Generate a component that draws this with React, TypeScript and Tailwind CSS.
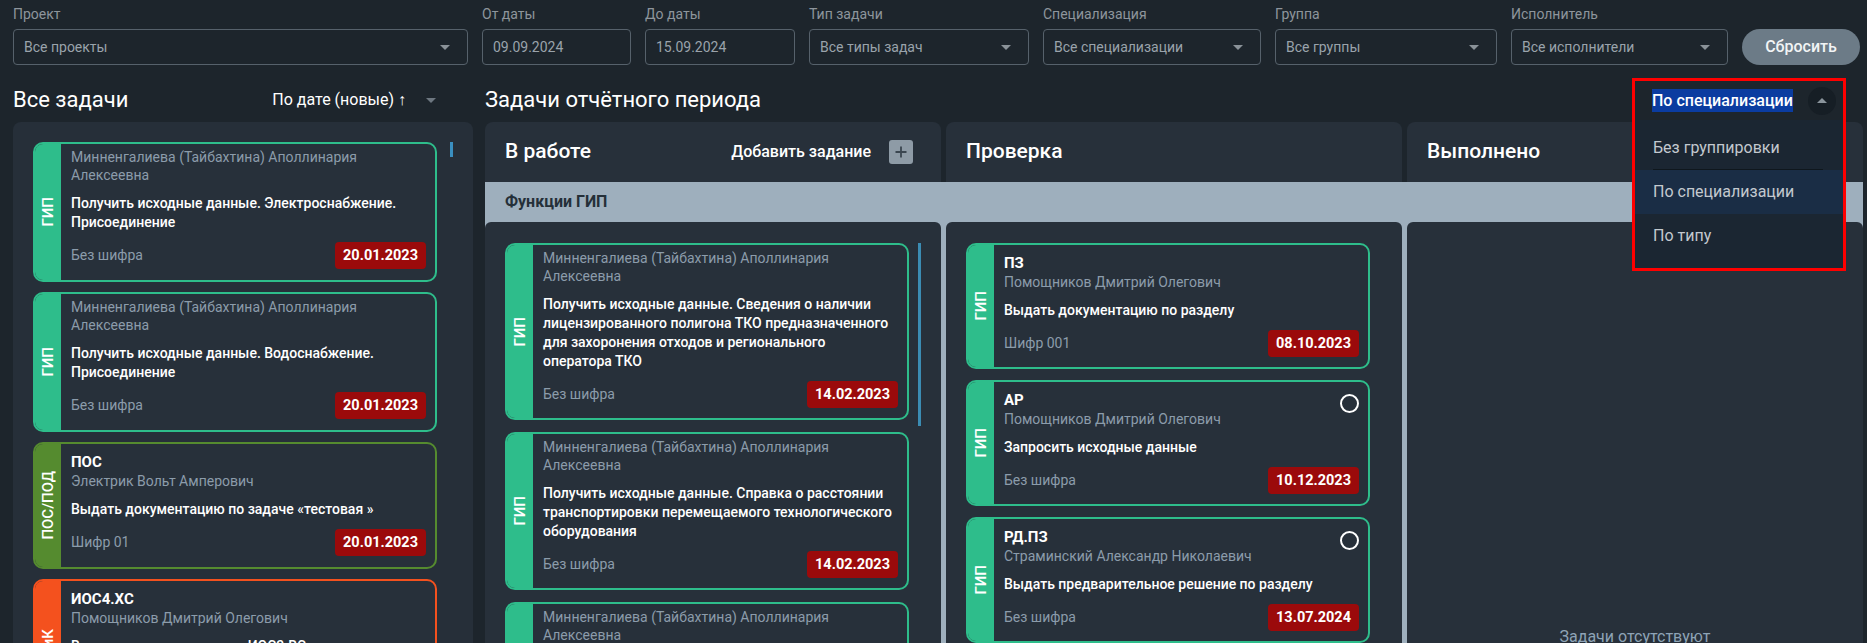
import React from "react";

type Tone = "green" | "olive" | "orange";

type Task = {
  strip: string;
  tone: Tone;
  code?: string;
  name: string[];
  title: string[];
  cipher: string;
  date: string;
  circle?: boolean;
};

const toneBorder: Record<Tone, string> = {
  green: "border-[#2ebd8b]",
  olive: "border-[#558b2f]",
  orange: "border-[#f4511e]",
};
const toneBg: Record<Tone, string> = {
  green: "bg-[#2ebd8b]",
  olive: "bg-[#558b2f]",
  orange: "bg-[#f4511e]",
};

const MIN = ["Минненгалиева (Тайбахтина) Аполлинария", "Алексеевна"];

const leftTasks: Task[] = [
  {
    strip: "ГИП",
    tone: "green",
    name: MIN,
    title: ["Получить исходные данные. Электроснабжение.", "Присоединение"],
    cipher: "Без шифра",
    date: "20.01.2023",
  },
  {
    strip: "ГИП",
    tone: "green",
    name: MIN,
    title: ["Получить исходные данные. Водоснабжение.", "Присоединение"],
    cipher: "Без шифра",
    date: "20.01.2023",
  },
  {
    strip: "ПОС/ПОД",
    tone: "olive",
    code: "ПОС",
    name: ["Электрик Вольт Амперович"],
    title: ["Выдать документацию по задаче «тестовая »"],
    cipher: "Шифр 01",
    date: "20.01.2023",
  },
  {
    strip: "ВиК",
    tone: "orange",
    code: "ИОС4.ХС",
    name: ["Помощников Дмитрий Олегович"],
    title: ["Выдать документацию по ИОС3.ВС"],
    cipher: "Без шифра",
    date: "20.01.2023",
  },
];

const workTasks: Task[] = [
  {
    strip: "ГИП",
    tone: "green",
    name: MIN,
    title: [
      "Получить исходные данные. Сведения о наличии",
      "лицензированного полигона ТКО предназначенного",
      "для захоронения отходов и регионального",
      "оператора ТКО",
    ],
    cipher: "Без шифра",
    date: "14.02.2023",
  },
  {
    strip: "ГИП",
    tone: "green",
    name: MIN,
    title: [
      "Получить исходные данные. Справка о расстоянии",
      "транспортировки перемещаемого технологического",
      "оборудования",
    ],
    cipher: "Без шифра",
    date: "14.02.2023",
  },
  {
    strip: "ГИП",
    tone: "green",
    name: MIN,
    title: ["Получить исходные данные. Технические условия"],
    cipher: "Без шифра",
    date: "14.02.2023",
  },
];

const checkTasks: Task[] = [
  {
    strip: "ГИП",
    tone: "green",
    code: "ПЗ",
    name: ["Помощников Дмитрий Олегович"],
    title: ["Выдать документацию по разделу"],
    cipher: "Шифр 001",
    date: "08.10.2023",
  },
  {
    strip: "ГИП",
    tone: "green",
    code: "АР",
    name: ["Помощников Дмитрий Олегович"],
    title: ["Запросить исходные данные"],
    cipher: "Без шифра",
    date: "10.12.2023",
    circle: true,
  },
  {
    strip: "ГИП",
    tone: "green",
    code: "РД.ПЗ",
    name: ["Страминский Александр Николаевич"],
    title: ["Выдать предварительное решение по разделу"],
    cipher: "Без шифра",
    date: "13.07.2024",
    circle: true,
  },
];

function Caret({ up = false, color = "#8a9298" }: { up?: boolean; color?: string }) {
  return (
    <svg width="10" height="5" viewBox="0 0 10 5" className="shrink-0">
      {up ? <polygon points="0,5 10,5 5,0" fill={color} /> : <polygon points="0,0 10,0 5,5" fill={color} />}
    </svg>
  );
}

function TaskCard({ t, roomy = false }: { t: Task; roomy?: boolean }) {
  return (
    <div className={"relative flex w-[404px] shrink-0 overflow-hidden rounded-[10px] border-2 bg-[#27303a] " + toneBorder[t.tone]}>
      <div className={"flex w-[26px] shrink-0 items-center justify-center " + toneBg[t.tone]}>
        <span className="rotate-180 whitespace-nowrap text-[15px] font-medium leading-[26px] text-white [writing-mode:vertical-rl]">
          {t.strip}
        </span>
      </div>
      <div
        className={
          "min-w-0 flex-1 pl-[10px] pr-[9px] " +
          (t.code ? "pt-[8px] " : "pt-[4px] ") +
          (roomy ? "pb-[11px]" : "pb-[10px]")
        }
      >
        {t.code && <div className="text-[15px] font-bold leading-[20px] text-white">{t.code}</div>}
        <div className="text-[14px] leading-[18px] text-[#8c9cab]">
          {t.name.map((l, i) => (
            <span key={i} className="block whitespace-nowrap">
              {l}
            </span>
          ))}
        </div>
        <div className="mt-[10px] text-[14px] font-medium leading-[19px] text-white">
          {t.title.map((l, i) => (
            <span key={i} className="block whitespace-nowrap">
              {l}
            </span>
          ))}
        </div>
        <div className="mt-[10px] flex h-[27px] items-center justify-between">
          <span className="text-[14px] text-[#8c9cab]">{t.cipher}</span>
          <span className="h-[27px] rounded-[4px] bg-[#9b0a0b] px-[8px] text-[14.5px] font-bold leading-[27px] text-white">
            {t.date}
          </span>
        </div>
      </div>
      {t.circle && (
        <span className="absolute right-[9px] top-[12px] h-[19px] w-[19px] rounded-full border-2 border-white" />
      )}
    </div>
  );
}

function SelectField({ label, value, width, caret = true }: { label: string; value: string; width: string; caret?: boolean }) {
  return (
    <div className={"flex shrink-0 flex-col " + width}>
      <div className="mb-[5px] text-[14px] leading-[20px] text-[#8e959c]">{label}</div>
      <div className="flex h-[36px] items-center justify-between rounded-[4px] border border-[#56616b] pl-[10px] pr-[17px] text-[14px] text-[#9aa3ab]">
        <span className="whitespace-nowrap">{value}</span>
        {caret && <Caret />}
      </div>
    </div>
  );
}

function PlusIcon() {
  return (
    <svg width="24" height="24" viewBox="0 0 24 24">
      <rect x="0" y="0" width="24" height="24" rx="3" fill="#8e9ba6" />
      <path d="M12 6.5v11M6.5 12h11" stroke="#3b4650" strokeWidth="1.8" />
    </svg>
  );
}

export default function App() {
  return (
    <div className="relative flex h-[643px] w-full flex-col overflow-hidden bg-[#1d252c] font-[Roboto,sans-serif]">
      {/* Filters */}
      <div className="flex items-end gap-[14px] pl-[13px] pt-[4px]">
        <SelectField label="Проект" value="Все проекты" width="w-[455px]" />
        <SelectField label="От даты" value="09.09.2024" width="w-[149px]" caret={false} />
        <SelectField label="До даты" value="15.09.2024" width="w-[150px]" caret={false} />
        <SelectField label="Тип задачи" value="Все типы задач" width="w-[220px]" />
        <SelectField label="Специализация" value="Все специализации" width="w-[218px]" />
        <SelectField label="Группа" value="Все группы" width="w-[222px]" />
        <SelectField label="Исполнитель" value="Все исполнители" width="w-[217px]" />
        <button className="h-[36px] w-[118px] shrink-0 rounded-full bg-[#6c7b87] text-[16px] font-medium text-[#f2f4f5]">
          Сбросить
        </button>
      </div>

      {/* Main */}
      <div className="flex min-h-0 flex-1 gap-[12px] pl-[13px] pr-[4px]">
        {/* Left: all tasks */}
        <div className="flex w-[460px] shrink-0 flex-col">
          <div className="flex h-[57px] items-start pt-[22px]">
            <span className="text-[22px] leading-[26px] text-white">Все задачи</span>
            <div className="ml-auto flex items-center gap-[20px] pr-[37px] pt-[1px]">
              <span className="text-[16px] leading-[24px] text-white">По дате (новые) ↑</span>
              <Caret color="#6d7780" />
            </div>
          </div>
          <div className="flex min-h-0 flex-1 gap-[13px] overflow-hidden rounded-t-[8px] bg-[#262f39] pl-[20px] pt-[20px]">
            <div className="flex flex-col gap-[10px]">
              {leftTasks.map((t, i) => (
                <TaskCard key={i} t={t} roomy />
              ))}
            </div>
            <div className="h-[15px] w-[3px] shrink-0 bg-[#3a8fc0]" />
          </div>
        </div>

        {/* Right: period tasks */}
        <div className="flex min-w-0 flex-1 flex-col">
          <div className="flex h-[57px] items-start pt-[22px]">
            <span className="text-[22px] leading-[26px] text-white">Задачи отчётного периода</span>
          </div>

          <div className="grid h-[60px] grid-cols-3 gap-[5px]">
            <div className="flex items-center rounded-t-[8px] bg-[#27303a] pl-[20px] pr-[28px]">
              <span className="text-[21px] font-medium text-white">В работе</span>
              <span className="ml-auto text-[16px] font-medium text-white">Добавить задание</span>
              <span className="ml-[18px] flex">
                <PlusIcon />
              </span>
            </div>
            <div className="flex items-center rounded-t-[8px] bg-[#27303a] pl-[20px]">
              <span className="text-[21px] font-medium text-white">Проверка</span>
            </div>
            <div className="flex items-center rounded-t-[8px] bg-[#27303a] pl-[20px]">
              <span className="text-[21px] font-medium text-white">Выполнено</span>
            </div>
          </div>

          <div className="flex min-h-0 flex-1 flex-col bg-[#9eafbd]">
            <div className="flex h-[40px] shrink-0 items-center pl-[20px]">
              <span className="text-[16px] font-bold text-[#253039]">Функции ГИП</span>
            </div>
            <div className="grid min-h-0 flex-1 grid-cols-3 gap-[5px]">
              <div className="flex gap-[9px] overflow-hidden rounded-t-[6px] bg-[#27303a] pl-[20px] pt-[21px]">
                <div className="flex flex-col gap-[12px]">
                  {workTasks.map((t, i) => (
                    <TaskCard key={i} t={t} />
                  ))}
                </div>
                <div className="h-[183px] w-[3px] shrink-0 bg-[#3b8cb3]" />
              </div>
              <div className="flex flex-col gap-[11px] overflow-hidden rounded-t-[6px] bg-[#27303a] pl-[20px] pt-[21px]">
                {checkTasks.map((t, i) => (
                  <TaskCard key={i} t={t} />
                ))}
              </div>
              <div className="flex justify-center overflow-hidden rounded-t-[6px] bg-[#27303a] pt-[405px]">
                <span className="text-[16px] leading-[20px] text-[#8ea3b6]">Задачи отсутствуют</span>
              </div>
            </div>
          </div>
        </div>
      </div>

      {/* Grouping dropdown (open) */}
      <div className="absolute left-[1632px] top-[78px] flex h-[193px] w-[214px] flex-col border-[3px] border-[#ff0000] bg-[#1d252c]">
        <div className="flex h-[39px] shrink-0 items-center pl-[17px] pr-[7px]">
          <span className="bg-[#0b3ca0] text-[16px] font-medium leading-[23px] text-white">По специализации</span>
          <span className="ml-auto flex h-[28px] w-[28px] items-center justify-center rounded-full bg-[#161e25]">
            <Caret up color="#8a949c" />
          </span>
        </div>
        <div className="flex-1 bg-[#1b2632] pt-[6px]">
          <div className="ml-[18px] mr-[20px] flex h-[44px] items-center border-b border-[#0f171d] text-[16px] text-[#c3c9cf]">
            Без группировки
          </div>
          <div className="flex h-[44px] items-center bg-[#1a2d45] pl-[18px] text-[16px] text-[#c3c9cf]">
            По специализации
          </div>
          <div className="flex h-[44px] items-center pl-[18px] text-[16px] text-[#c3c9cf]">По типу</div>
        </div>
      </div>
    </div>
  );
}
